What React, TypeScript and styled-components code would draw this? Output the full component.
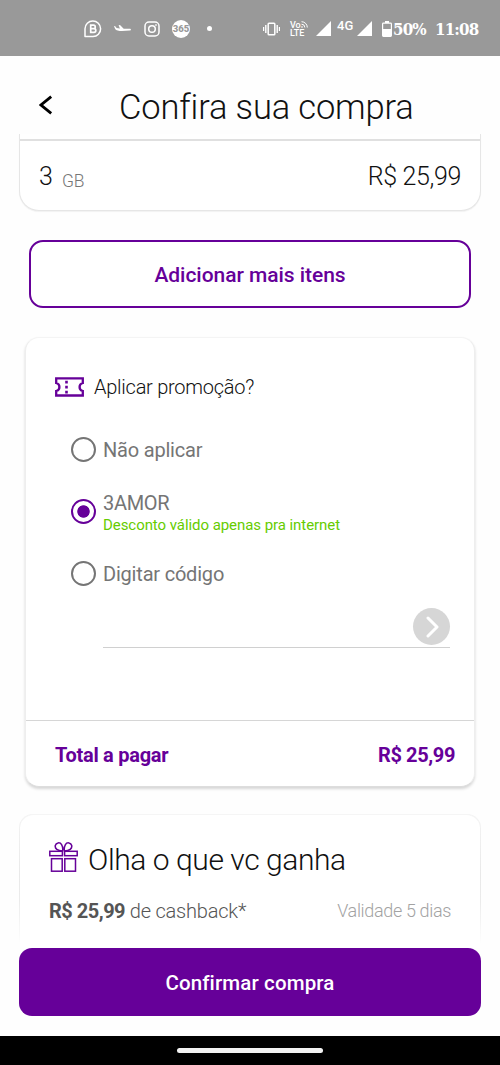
import React, { useState } from "react";
import styled, { createGlobalStyle } from "styled-components";

const PURPLE = "#660099";
const GREY = "#757575";

const GlobalStyle = createGlobalStyle`
  * { box-sizing: border-box; }
  body { margin: 0; background: #fff; }
  button { font: inherit; cursor: pointer; }
`;

const Screen = styled.div`
  width: 500px;
  height: 1065px;
  display: flex;
  flex-direction: column;
  overflow: hidden;
  background: #fefefe;
  font-family: Roboto, "Liberation Sans", sans-serif;
`;

const Text = styled.span<{
  $size: number;
  $weight?: number;
  $color?: string;
  $spacing?: number;
}>`
  font-size: ${(p) => p.$size}px;
  font-weight: ${(p) => p.$weight ?? 400};
  color: ${(p) => p.$color ?? "#111"};
  letter-spacing: ${(p) => p.$spacing ?? 0}px;
  line-height: 1.2;
  white-space: nowrap;
`;

const StatusBar = styled.div`
  height: 56px;
  flex: none;
  display: flex;
  align-items: center;
  padding: 1px 0 0 84px;
  background: #999;
  color: #fff;
`;

const Notifications = styled.div`
  width: 179px;
  display: flex;
  align-items: center;
`;

const Indicators = styled.div`
  display: flex;
  align-items: center;
`;

const Glyph = styled.svg<{ $gap?: number }>`
  display: block;
  flex: none;
  margin-right: ${(p) => p.$gap ?? 0}px;
`;

const Badge365 = styled.span`
  width: 18px;
  height: 18px;
  margin-right: 17px;
  border-radius: 50%;
  display: flex;
  align-items: center;
  justify-content: center;
  background: #fff;
  color: #999;
  font: 900 9.5px/1 Roboto, sans-serif;
`;

const Dot = styled.span`
  width: 5px;
  height: 5px;
  border-radius: 50%;
  background: #fff;
`;

const VoLte = styled.div`
  width: 18px;
  height: 16px;
  margin-right: 8px;
  display: flex;
  flex-direction: column;
  justify-content: space-between;
  font: 500 9px/8px Roboto, sans-serif;
`;

const VoRow = styled.div`
  display: flex;
  align-items: center;
`;

const NetworkLabel = styled.span`
  width: 17px;
  height: 19px;
  margin-right: 3px;
  font: 500 13px/13px Roboto, sans-serif;
`;

const Clock = styled.span<{ $width: number }>`
  width: ${(p) => p.$width}px;
  font: bold 16.8px/20px "DejaVu Serif Condensed", "DejaVu Serif", serif;
  font-stretch: condensed;
  letter-spacing: -0.85px;
  white-space: nowrap;
`;

const Header = styled.header`
  height: 78px;
  flex: none;
  display: flex;
  align-items: center;
  padding: 20px 0 0 39px;
  gap: 66px;
`;

const HeaderTitle = styled.h1`
  margin: 0;
  padding-top: 5px;
  display: flex;
`;

const BackButton = styled.button`
  width: 14px;
  height: 20px;
  padding: 0;
  border: 0;
  background: none;
`;

const ItemCard = styled.section`
  height: 77px;
  flex: none;
  margin: 0 19px;
  padding-top: 5px;
  border: solid #e6e6e6;
  border-width: 0 1.5px 1px;
  border-radius: 0 0 20px 20px;
  box-shadow: 0 1px 1px rgba(0, 0, 0, 0.05);
  background: #fff;
`;

const ItemRow = styled.div`
  height: 70px;
  display: flex;
  align-items: center;
  justify-content: space-between;
  padding: 4px 19px 0 19px;
  border-top: 2px solid #e0e0e0;
`;

const Quantity = styled.div`
  display: flex;
  align-items: flex-end;
  gap: 9px;
`;

const OutlineButton = styled.button`
  height: 68px;
  flex: none;
  margin: 29px 29px 29px;
  border: 2px solid ${PURPLE};
  border-radius: 14px;
  background: #fff;
  padding: 4px 0 0;
`;

const PromoCard = styled.section`
  height: 450px;
  flex: none;
  margin: 0 25px;
  display: flex;
  flex-direction: column;
  border-radius: 14px;
  background: #fff;
  border: 1px solid #eee;
  border-top-color: #f4f4f4;
  border-bottom-color: #ddd;
  box-shadow: 0 2px 3px rgba(0, 0, 0, 0.16);
`;

const PromoBody = styled.div`
  height: 382px;
  display: flex;
  flex-direction: column;
  padding: 36px 24px 0 29px;
`;

const PromoTitle = styled.div`
  display: flex;
  align-items: center;
  height: 25px;
  gap: 10px;
`;

const Options = styled.div`
  display: flex;
  flex-direction: column;
  padding: 19px 0 0 16px;
`;

const Option = styled.label`
  height: 62px;
  display: flex;
  align-items: center;
  gap: 7px;
  cursor: pointer;
`;

const OptionText = styled.span`
  display: flex;
  flex-direction: column;
  gap: 1px;
  padding-top: 2px;
`;

const Radio = styled.input`
  appearance: none;
  width: 25px;
  height: 25px;
  margin: 0;
  flex: none;
  border: 2.5px solid ${GREY};
  border-radius: 50%;
  &:checked {
    border-color: ${PURPLE};
    background: radial-gradient(circle, ${PURPLE} 5.8px, transparent 6.6px);
  }
`;

const CodeField = styled.div`
  height: 44px;
  margin: 0 0 0 48px;
  display: flex;
  align-items: flex-start;
  justify-content: space-between;
  border-bottom: 1px solid #d0d0d0;
`;

const CodeInput = styled.input`
  width: 290px;
  height: 36px;
  border: 0;
  outline: 0;
  background: none;
  font: 20px Roboto, sans-serif;
`;

const SendButton = styled.button`
  width: 37px;
  height: 37px;
  margin-top: 4px;
  padding: 0;
  border: 0;
  border-radius: 50%;
  display: flex;
  align-items: center;
  justify-content: center;
  background: #d6d6d6;
`;

const TotalRow = styled.div`
  flex: 1;
  display: flex;
  align-items: center;
  justify-content: space-between;
  padding: 2px 19px 0 29px;
  border-top: 1px solid #d6d6d6;
`;

const GiftCard = styled.section`
  height: 134px;
  flex: none;
  margin: 27px 19px 0;
  padding: 0 1px 0;
  border-radius: 14px 14px 0 0;
  background: linear-gradient(#f3f3f3, #e9e9e9 45%, #ebebeb 65%, #fefefe 97%);
`;

const GiftInner = styled.div`
  height: 134px;
  padding: 27px 29px 0 29px;
  border-radius: 14px 14px 0 0;
  background: #fff;
  border-top: 1px solid #f5f5f5;
`;

const GiftTitle = styled.div`
  height: 36px;
  display: flex;
  align-items: flex-start;
  gap: 10px;
`;

const GiftRow = styled.div`
  height: 30px;
  margin-top: 18px;
  display: flex;
  align-items: center;
  justify-content: space-between;
`;

const ConfirmButton = styled.button`
  height: 68px;
  flex: none;
  margin: 0 19px 20px;
  border: 0;
  border-radius: 13px;
  background: ${PURPLE};
  padding: 3px 0 0;
`;

const NavBar = styled.div`
  flex: 1;
  display: flex;
  justify-content: center;
  padding-top: 12px;
  background: #000;
`;

const HomePill = styled.span`
  width: 146px;
  height: 5px;
  border-radius: 3px;
  background: #f2f2f2;
`;

function BusinessIcon() {
  return (
    <Glyph $gap={12} width="18" height="18" viewBox="0 0 18 18" fill="none" stroke="#fff" strokeWidth="1.5">
      <path d="M1 16.6V8.7A7.8 7.8 0 1 1 9 16.6Z" strokeLinejoin="round" />
      <path d="M6.7 5.2h2.8a1.7 1.7 0 0 1 0 3.5H6.7zM6.7 8.7H10a1.8 1.8 0 0 1 0 3.6H6.7z" strokeWidth="1.7" />
    </Glyph>
  );
}

function PlaneIcon() {
  return (
    <Glyph $gap={13} width="17" height="8" viewBox="0 0 17 8" fill="#fff">
      <path d="M0 1.2l1-.2 1.6 2 3.3.4L4.6.2 6 0l3.7 3.7h6c1.6.1 1.6 1.8 0 1.9L8 6C4.700 6 2 5.400 1.200 3.900z" />
    </Glyph>
  );
}

function CameraIcon() {
  return (
    <Glyph $gap={12} width="16" height="16" viewBox="0 0 16 16" fill="none" stroke="#fff" strokeWidth="1.5">
      <rect x="1" y="1" width="14" height="14" rx="4" />
      <circle cx="8" cy="8" r="3.3" />
      <circle cx="12" cy="4" r=".6" fill="#fff" strokeWidth=".6" />
    </Glyph>
  );
}

function VibrateIcon() {
  return (
    <Glyph $gap={10} width="17" height="14" viewBox="0 0 17 14" fill="none" stroke="#fff">
      <rect x="5.200" y="1.200" width="6.600" height="11.600" rx=".8" strokeWidth="1.500" />
      <path d="M2.800 3v8M14.200 3v8" strokeWidth="1.400" />
      <path d="M.6 5v4M16.400 5v4" strokeWidth="1.200" />
    </Glyph>
  );
}

function WaveIcon() {
  return (
    <Glyph width="7" height="7" viewBox="0 0 7 7" fill="none" stroke="#fff" strokeWidth="1">
      <path d="M.5.700a5.800 5.800 0 0 1 5.800 5.800M.5 3.200a3.300 3.300 0 0 1 3.300 3.300" />
      <circle cx="1" cy="6" r=".4" />
    </Glyph>
  );
}

function SignalIcon({ gap }: { gap: number }) {
  return (
    <Glyph $gap={gap} width="15" height="15" viewBox="0 0 15 15" fill="#fff">
      <path d="M15 0v15H0z" />
    </Glyph>
  );
}

function BatteryIcon() {
  return (
    <Glyph $gap={1} width="10" height="16" viewBox="0 0 10 16" fill="none" stroke="#fff" strokeWidth="1.200">
      <rect x=".6" y="2.100" width="8.800" height="13.300" rx=".8" />
      <path d="M3 1h4" strokeWidth="2" />
      <path d="M1 8h8v7H1z" fill="#fff" stroke="none" />
    </Glyph>
  );
}

function TicketIcon() {
  return (
    <Glyph width="29" height="20" viewBox="0 0 29 20" fill="none" stroke={PURPLE}>
      <path d="M1.200 1.300h26.600v4.700c-4.300 1-4.300 7 0 8v4.500H1.200V14c4.300-1 4.300-7 0-8z" strokeWidth="2.300" />
      <path d="M11.500 3.800v13" strokeWidth="2.600" strokeDasharray="2.800 2.200" />
    </Glyph>
  );
}

function GiftIcon() {
  return (
    <Glyph width="29" height="30" viewBox="0 0 29 30" fill="none" stroke={PURPLE} strokeWidth="1.500">
      <rect x=".8" y="9.300" width="12.600" height="4.400" />
      <rect x="15.600" y="9.300" width="12.600" height="4.400" />
      <rect x="2.500" y="16.700" width="10.700" height="12.500" />
      <rect x="15.800" y="16.700" width="10.700" height="12.500" />
      <path d="M13.500 9C8.500 9 5.700 6.500 6.300 3.500 7 .5 11-.2 12.600 2.700 13.700 4.700 14 7 13.500 9zM15.500 9c5 0 7.800-2.500 7.200-5.500C22 .5 18-.2 16.400 2.700 15.300 4.700 15 7 15.500 9z" />
    </Glyph>
  );
}

const OptionLabel = styled(Text)`
  padding-top: 2px;
`;

export default function App() {
  const [choice, setChoice] = useState("promo");
  const radio = (value: string) => ({
    type: "radio",
    name: "promo",
    checked: choice === value,
    onChange: () => setChoice(value),
  });

  return (
    <Screen>
      <GlobalStyle />
      <StatusBar>
        <Notifications>
          <BusinessIcon />
          <PlaneIcon />
          <CameraIcon />
          <Badge365>365</Badge365>
          <Dot />
        </Notifications>
        <Indicators>
          <VibrateIcon />
          <VoLte>
            <VoRow>Vo<WaveIcon /></VoRow>
            <span>LTE</span>
          </VoLte>
          <SignalIcon gap={6} />
          <NetworkLabel>4G</NetworkLabel>
          <SignalIcon gap={10} />
          <BatteryIcon />
          <Clock $width={42}>50%</Clock>
          <Clock $width={46}>11:08</Clock>
        </Indicators>
      </StatusBar>

      <Header>
        <BackButton aria-label="Voltar">
          <Glyph width="14" height="20" viewBox="0 0 14 20" fill="none" stroke="#000" strokeWidth="2.800">
            <path d="M12.200 1.700 2 10l10.200 8.300" />
          </Glyph>
        </BackButton>
        <HeaderTitle>
          <Text $size={34.5} $weight={300} $spacing={-0.15}>Confira sua compra</Text>
        </HeaderTitle>
      </Header>

      <ItemCard>
        <ItemRow>
          <Quantity>
            <Text $size={25} $weight={300}>3</Text>
            <Text $size={17.5} $weight={300} $color="#777" $spacing={-0.2}>GB</Text>
          </Quantity>
          <Text $size={25} $weight={300} $spacing={-0.35}>R$ 25,99</Text>
        </ItemRow>
      </ItemCard>

      <OutlineButton>
        <Text $size={21} $weight={500} $color={PURPLE} $spacing={-0.05}>Adicionar mais itens</Text>
      </OutlineButton>

      <PromoCard>
        <PromoBody>
          <PromoTitle>
            <TicketIcon />
            <Text $size={20} $weight={300} $spacing={-0.25}>Aplicar promoção?</Text>
          </PromoTitle>
          <Options>
            <Option>
              <Radio {...radio("none")} />
              <OptionLabel $size={20} $color={GREY} $spacing={-0.2}>Não aplicar</OptionLabel>
            </Option>
            <Option>
              <Radio {...radio("promo")} />
              <OptionText>
                <Text $size={20} $color={GREY} $spacing={-0.3}>3AMOR</Text>
                <Text $size={15} $color="#66cc00" $spacing={-0.06}>Desconto válido apenas pra internet</Text>
              </OptionText>
            </Option>
            <Option>
              <Radio {...radio("code")} />
              <OptionLabel $size={20} $color={GREY} $spacing={-0.2}>Digitar código</OptionLabel>
            </Option>
          </Options>
          <CodeField>
            <CodeInput aria-label="Código" />
            <SendButton aria-label="Enviar código">
              <Glyph width="14" height="22" viewBox="0 0 14 22" fill="none" stroke="#fff" strokeWidth="3" strokeLinecap="round" strokeLinejoin="round">
                <path d="M3 2l9 9-9 9" />
              </Glyph>
            </SendButton>
          </CodeField>
        </PromoBody>
        <TotalRow>
          <Text $size={20} $weight={700} $color={PURPLE} $spacing={-0.27}>Total a pagar</Text>
          <Text $size={20} $weight={700} $color={PURPLE} $spacing={-0.38}>R$ 25,99</Text>
        </TotalRow>
      </PromoCard>

      <GiftCard>
        <GiftInner>
          <GiftTitle>
            <GiftIcon />
            <Text $size={30} $weight={300} $spacing={-0.43}>Olha o que vc ganha</Text>
          </GiftTitle>
          <GiftRow>
            <Text $size={20} $weight={300} $color="#555" $spacing={-0.2}>
              <Text $size={20} $weight={700} $color="#555" $spacing={-0.5}>R$ 25,99</Text> de cashback*
            </Text>
            <Text $size={18} $weight={300} $color="#a3a3a3" $spacing={-0.35}>Validade 5 dias</Text>
          </GiftRow>
        </GiftInner>
      </GiftCard>

      <ConfirmButton>
        <Text $size={20.5} $weight={500} $color="#fff" $spacing={0.13}>Confirmar compra</Text>
      </ConfirmButton>
      <NavBar>
        <HomePill />
      </NavBar>
    </Screen>
  );
}
